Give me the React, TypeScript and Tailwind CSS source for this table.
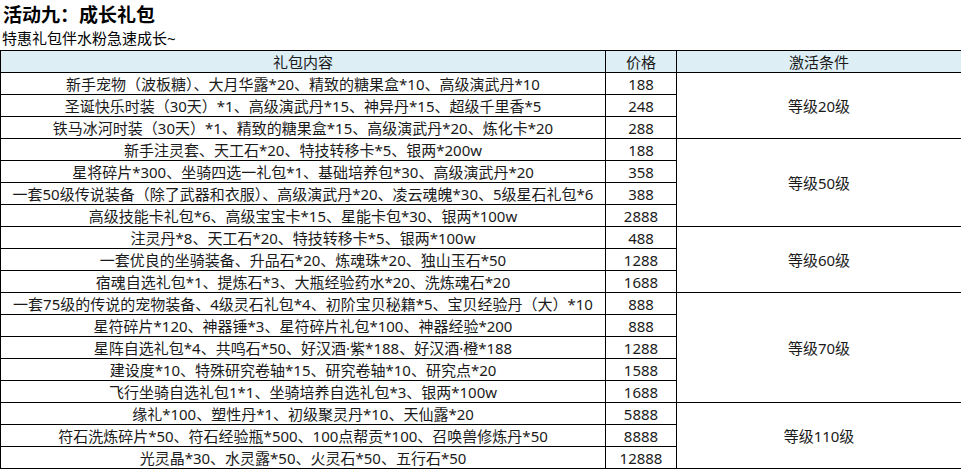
import React from "react";

type Row = { text: string; price: string; level?: string; span?: number };

const rows: Row[] = [
  { text: "新手宠物（波板糖）、大月华露*20、精致的糖果盒*10、高级演武丹*10", price: "188", level: "等级20级", span: 3 },
  { text: "圣诞快乐时装（30天）*1、高级演武丹*15、神异丹*15、超级千里香*5", price: "248" },
  { text: "铁马冰河时装（30天）*1、精致的糖果盒*15、高级演武丹*20、炼化卡*20", price: "288" },
  { text: "新手注灵套、天工石*20、特技转移卡*5、银两*200w", price: "188", level: "等级50级", span: 4 },
  { text: "星将碎片*300、坐骑四选一礼包*1、基础培养包*30、高级演武丹*20", price: "358" },
  { text: "一套50级传说装备（除了武器和衣服）、高级演武丹*20、凌云魂魄*30、5级星石礼包*6", price: "388" },
  { text: "高级技能卡礼包*6、高级宝宝卡*15、星能卡包*30、银两*100w", price: "2888" },
  { text: "注灵丹*8、天工石*20、特技转移卡*5、银两*100w", price: "488", level: "等级60级", span: 3 },
  { text: "一套优良的坐骑装备、升品石*20、炼魂珠*20、独山玉石*50", price: "1288" },
  { text: "宿魂自选礼包*1、提炼石*3、大瓶经验药水*20、洗炼魂石*20", price: "1688" },
  { text: "一套75级的传说的宠物装备、4级灵石礼包*4、初阶宝贝秘籍*5、宝贝经验丹（大）*10", price: "888", level: "等级70级", span: 5 },
  { text: "星符碎片*120、神器锤*3、星符碎片礼包*100、神器经验*200", price: "888" },
  { text: "星阵自选礼包*4、共鸣石*50、好汉酒·紫*188、好汉酒·橙*188", price: "1288" },
  { text: "建设度*10、特殊研究卷轴*15、研究卷轴*10、研究点*20", price: "1588" },
  { text: "飞行坐骑自选礼包1*1、坐骑培养自选礼包*3、银两*100w", price: "1688" },
  { text: "缘礼*100、塑性丹*1、初级聚灵丹*10、天仙露*20", price: "5888", level: "等级110级", span: 3 },
  { text: "符石洗炼碎片*50、符石经验瓶*500、100点帮贡*100、召唤兽修炼丹*50", price: "8888" },
  { text: "光灵晶*30、水灵露*50、火灵石*50、五行石*50", price: "12888" },
];

const font = { fontFamily: '"Noto Sans", "Noto Sans CJK SC", sans-serif' };

export default function App() {
  return (
    <div
      className="w-[961px] h-[469px] bg-white text-[#1a1a1a] overflow-hidden"
      style={font}
    >
      <div className="h-[29px] pl-[3px] pt-[3px] text-[19px] leading-[24px] font-bold text-black">
        活动九：成长礼包
      </div>
      <div className="h-[21px] pl-[2px] text-[15px] leading-[19px] text-black">
        特惠礼包伴水粉急速成长~
      </div>
      <table className="border-collapse table-fixed w-[961px] text-[15px] leading-[20px]">
        <colgroup>
          <col className="w-[605px]" />
          <col className="w-[71px]" />
          <col className="w-[285px]" />
        </colgroup>
        <thead>
          <tr className="h-[22px] bg-[#ddeef5]">
            <th className="border border-black font-normal p-0 text-center">礼包内容</th>
            <th className="border border-black font-normal p-0 text-center">价格</th>
            <th className="border border-black font-normal p-0 text-center">激活条件</th>
          </tr>
        </thead>
        <tbody>
          {rows.map((r, i) => (
            <tr key={i} className="h-[22px]">
              <td className="border border-black p-0 text-center whitespace-nowrap">{r.text}</td>
              <td className="border border-black p-0 text-center">{r.price}</td>
              {r.level && (
                <td rowSpan={r.span} className="border border-black p-0 text-center">
                  {r.level}
                </td>
              )}
            </tr>
          ))}
        </tbody>
      </table>
    </div>
  );
}
